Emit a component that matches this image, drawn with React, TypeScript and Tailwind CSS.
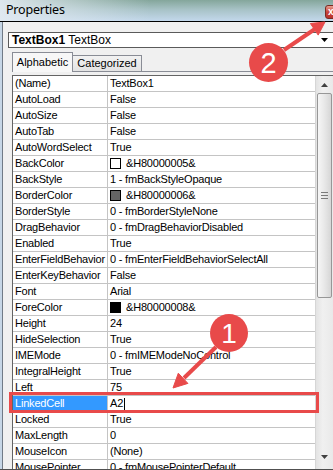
import React from 'react';

type Row = {
  name: string;
  value: string;
  swatch?: string;
  selected?: boolean;
};

const rows: Row[] = [
  { name: '(Name)', value: 'TextBox1' },
  { name: 'AutoLoad', value: 'False' },
  { name: 'AutoSize', value: 'False' },
  { name: 'AutoTab', value: 'False' },
  { name: 'AutoWordSelect', value: 'True' },
  { name: 'BackColor', value: '&H80000005&', swatch: 'bg-white' },
  { name: 'BackStyle', value: '1 - fmBackStyleOpaque' },
  { name: 'BorderColor', value: '&H80000006&', swatch: 'bg-[#646464]' },
  { name: 'BorderStyle', value: '0 - fmBorderStyleNone' },
  { name: 'DragBehavior', value: '0 - fmDragBehaviorDisabled' },
  { name: 'Enabled', value: 'True' },
  { name: 'EnterFieldBehavior', value: '0 - fmEnterFieldBehaviorSelectAll' },
  { name: 'EnterKeyBehavior', value: 'False' },
  { name: 'Font', value: 'Arial' },
  { name: 'ForeColor', value: '&H80000008&', swatch: 'bg-black' },
  { name: 'Height', value: '24' },
  { name: 'HideSelection', value: 'True' },
  { name: 'IMEMode', value: '0 - fmIMEModeNoControl' },
  { name: 'IntegralHeight', value: 'True' },
  { name: 'Left', value: '75' },
  { name: 'LinkedCell', value: 'A2', selected: true },
  { name: 'Locked', value: 'True' },
  { name: 'MaxLength', value: '0' },
  { name: 'MouseIcon', value: '(None)' },
  { name: 'MousePointer', value: '0 - fmMousePointerDefault' },
];

const PropertyRow = ({ row }: { row: Row }) => (
  <div className="flex h-[16px] shrink-0 border-b border-[#c4c4c4]">
    <div
      className={`flex w-[95px] shrink-0 items-center border-r border-[#c4c4c4] pl-[2px] ${
        row.selected ? 'bg-[#3399ff] text-white' : 'text-black'
      }`}
    >
      {row.name}
    </div>
    <div className="flex flex-1 items-center pl-[2px] text-black">
      {row.swatch && (
        <span className={`mr-[5px] h-[11px] w-[11px] border border-black ${row.swatch}`} />
      )}
      {row.value}
      {row.selected && <span className="ml-[1px] h-[12px] w-px bg-black" />}
    </div>
  </div>
);

const ScrollBar = () => (
  <div className="flex w-[18px] shrink-0 flex-col border-l border-[#d6d6d6] bg-[linear-gradient(to_right,#e3e3e3,#f0f0f0_40%,#e9e9e9)]">
    <div className="flex h-[17px] shrink-0 items-center justify-center">
      <svg width="7" height="4" viewBox="0 0 7 4">
        <path d="M3.5 0 L7 4 L0 4 Z" fill="#404040" />
      </svg>
    </div>
    <div className="mx-[1px] flex h-[205px] shrink-0 items-center justify-center rounded-[2px] border border-[#979797] bg-[linear-gradient(to_right,#f6f6f6,#e6e6e6_55%,#d6d6d6)]">
      <div className="flex flex-col gap-[2px]">
        <span className="h-px w-[7px] bg-[#7a7a7a]" />
        <span className="h-px w-[7px] bg-[#7a7a7a]" />
        <span className="h-px w-[7px] bg-[#7a7a7a]" />
      </div>
    </div>
    <div className="flex-1" />
    <div className="mb-[4px] flex h-[17px] shrink-0 items-center justify-center">
      <svg width="7" height="4" viewBox="0 0 7 4">
        <path d="M0 0 L7 0 L3.5 4 Z" fill="#404040" />
      </svg>
    </div>
  </div>
);

const Annotations = () => (
  <svg
    className="pointer-events-none absolute left-0 top-0"
    width="333"
    height="470"
    viewBox="0 0 333 470"
  >
    <g fill="#e84a4a" stroke="#e84a4a">
      <line x1="284" y1="50" x2="315" y2="29" strokeWidth="4" />
      <polygon points="325,22 318.2,35.1 310.4,23.5" strokeWidth="1" />
      <circle cx="268.5" cy="62.5" r="19.5" stroke="none" />

      <line x1="216" y1="347" x2="184" y2="378" strokeWidth="4" />
      <polygon points="173,388 187.9,383.4 178.3,373.2" strokeWidth="1" />
      <circle cx="229" cy="333" r="19" stroke="none" />

      <rect x="10.5" y="393.5" width="307" height="18" fill="none" strokeWidth="3" />
    </g>
    <text
      x="268.5"
      y="73"
      textAnchor="middle"
      fill="white"
      fontSize="29"
      fontFamily="Liberation Sans, Arial, sans-serif"
    >
      2
    </text>
    <text
      x="229"
      y="343"
      textAnchor="middle"
      fill="white"
      fontSize="28"
      fontFamily="Liberation Sans, Arial, sans-serif"
    >
      1
    </text>
  </svg>
);

export default function App() {
  return (
    <div className="relative flex h-[470px] w-[333px] flex-col overflow-hidden bg-[#f0f0f0] font-['Liberation_Sans',Arial,sans-serif]">
      {/* title bar */}
      <div className="flex h-[22px] shrink-0 items-center border-b border-black bg-[linear-gradient(to_right,rgba(226,234,241,0.95),rgba(226,234,241,0)_45%),linear-gradient(to_bottom,#84a69b,#a7c2c6_45%,#c3d8ec)] pl-[6px]">
        <span className="text-[12.5px] text-black font-['Noto_Sans',sans-serif] tracking-[-0.2px]">
          Properties
        </span>
        <div className="ml-auto mr-[-14px] mt-[2px] flex h-[14px] w-[22px] items-center justify-start rounded-[3px] border border-[#7a2a22] bg-[linear-gradient(to_bottom,#e8a092,#c8453a_50%,#b8302a)] pl-[2px] text-[10px] font-bold leading-none text-white">
          x
        </div>
      </div>

      <div className="flex min-h-0 flex-1">
        {/* window left frame */}
        <div className="w-[2px] shrink-0 bg-[#c6d6e6]" />
        <div className="w-px shrink-0 bg-[#707a86]" />

        <div className="flex min-w-0 flex-1 flex-col">
          {/* object combo */}
          <div className="ml-[5px] mt-[10px] flex h-[16px] w-[330px] shrink-0 items-center border border-[#5a5a5a] bg-white">
            <span className="pl-[3px] text-[12px] leading-none text-black">
              <b>TextBox1</b> TextBox
            </span>
            <div className="ml-auto mr-[6px] flex h-full w-[14px] items-center justify-center">
              <svg width="7" height="4" viewBox="0 0 7 4">
                <path d="M0 0 L7 0 L3.5 4 Z" fill="#000" />
              </svg>
            </div>
          </div>

          {/* tabs */}
          <div className="mt-[4px] flex h-[20px] shrink-0 items-end text-[11px] text-black">
            <div className="ml-[9px] flex h-[20px] w-[61px] items-center justify-center border border-b-0 border-[#898c95] bg-[#f7f7f7]">
              Alphabetic
            </div>
            <div className="flex h-[17px] flex-1 items-stretch border-b border-[#898c95]">
              <div className="flex w-[69px] items-center justify-center border-r border-t border-[#898c95] bg-[linear-gradient(to_bottom,#f2f2f2,#e3e3e3)]">
                Categorized
              </div>
            </div>
          </div>

          {/* property grid */}
          <div className="ml-[9px] mt-[3px] flex min-h-0 flex-1 border-l border-t border-[#646464] text-[11px] tracking-[-0.2px]">
            <div className="flex min-w-0 flex-1 flex-col overflow-hidden bg-white">
              {rows.map((row) => (
                <PropertyRow key={row.name} row={row} />
              ))}
            </div>
            <ScrollBar />
          </div>
        </div>
      </div>
      <div className="h-px shrink-0 bg-[#505050]" />

      <Annotations />
    </div>
  );
}
